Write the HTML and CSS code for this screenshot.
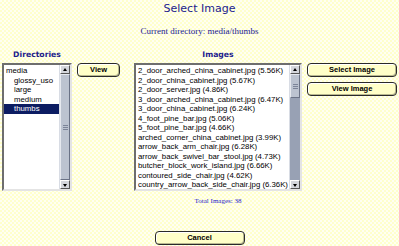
FILE: index.html
```html
<!doctype html>
<html lang="en">
<head>
  <meta charset="utf-8" />
  <title>Select Image</title>
  <link rel="stylesheet" href="styles.css">
</head>
<body>
  <h1 class="title">Select Image</h1>
  <p class="curdir">Current directory: media/thumbs</p>

  <div class="main">
    <div class="heading h-dirs">Directories</div>
    <div class="heading h-images">Images</div>

    <div class="listbox dirs">
      <ul class="items">
        <li>media</li>
        <li class="sub">glossy_uso</li>
        <li class="sub">large</li>
        <li class="sub">medium</li>
        <li class="sub sel">thumbs</li>
      </ul>
      <div class="sbar">
        <div class="arrow up"></div>
        <div class="track"><div class="thumb full"><span class="grip"></span></div></div>
        <div class="arrow down"></div>
      </div>
    </div>

    <div class="col-view"><button class="btn btn-view">View</button></div>

    <div class="listbox images">
      <ul class="items">
        <li>2_door_arched_china_cabinet.jpg (5.56K)</li>
        <li>2_door_china_cabinet.jpg (5.67K)</li>
        <li>2_door_server.jpg (4.86K)</li>
        <li>3_door_arched_china_cabinet.jpg (6.47K)</li>
        <li>3_door_china_cabinet.jpg (6.24K)</li>
        <li>4_foot_pine_bar.jpg (5.06K)</li>
        <li>5_foot_pine_bar.jpg (4.66K)</li>
        <li>arched_corner_china_cabinet.jpg (3.99K)</li>
        <li>arrow_back_arm_chair.jpg (6.28K)</li>
        <li>arrow_back_swivel_bar_stool.jpg (4.73K)</li>
        <li>butcher_block_work_island.jpg (6.66K)</li>
        <li>contoured_side_chair.jpg (4.62K)</li>
        <li>country_arrow_back_side_chair.jpg (6.36K)</li>
      </ul>
      <div class="sbar">
        <div class="arrow up"></div>
        <div class="track"><div class="thumb small"><span class="grip"></span></div></div>
        <div class="arrow down"></div>
      </div>
    </div>

    <div class="col-actions">
      <button class="btn btn-wide">Select Image</button>
      <button class="btn btn-wide">View Image</button>
    </div>

    <div class="total">Total Images: 38</div>
  </div>

  <div class="footer"><button class="btn btn-cancel">Cancel</button></div>
</body>
</html>
```

FILE: styles.css
```css
html, body { margin:0; padding:0; height:100%; overflow:hidden; }
body{
  background-color:#ffffe4;
  background-image: repeating-conic-gradient(#ffffcc 0 25%, #fffff2 0 50%);
  background-size:4px 4px;
  font-family:"Liberation Sans", Arial, sans-serif; color:#000;
}
.title{ margin:0; text-align:center; font:normal 11px/18px "DejaVu Sans", Verdana, sans-serif; color:#1c1c8c; }
.curdir{ margin:7px 0 0; text-align:center; font:9px/12px "Liberation Serif", serif; color:#1a1a90; }

.main{
  display:grid; margin:13px 0 0 2px;
  grid-template-columns:70px 52px 168px 90px; column-gap:5px;
  grid-template-rows:9px 128px auto; row-gap:4px;
}
.heading{ text-align:center; font:bold 7.7px/9px "DejaVu Sans", Verdana, sans-serif; color:#1c1c8c; }
.h-dirs{ grid-column:1; grid-row:1; }
.h-images{ grid-column:3; grid-row:1; }

.listbox{
  grid-row:2; display:flex; background:#fff;
  border:2px solid; border-color:#6e6e6e #e4e4e4 #e4e4e4 #6e6e6e;
}
.dirs{ grid-column:1; }
.images{ grid-column:3; }
.items{ flex:1; margin:0; padding:1px 0 0; list-style:none; overflow:hidden;
  font-size:7.8px; line-height:9.5px; white-space:nowrap; }
.items li{ padding-left:2px; }
.items .sub{ padding-left:10px; }
.items .sel{ background:#0c1c62; color:#fff; }

.sbar{ width:10px; display:flex; flex-direction:column; background:#a4acbe; border-left:1px solid #d8dce4; }
.arrow{ height:9px; background:#d4d6dc; border:1px solid; border-color:#fff #555 #555 #fff; box-sizing:border-box; position:relative; }
.arrow::after{ content:""; position:absolute; left:2px; border-left:2.5px solid transparent; border-right:2.5px solid transparent; }
.up::after{ top:2px; border-bottom:3px solid #000; }
.down::after{ top:3px; border-top:3px solid #000; }
.track{ flex:1; display:flex; flex-direction:column; background:#98a1b4; }
.thumb{ background:#bcc3d0; border:1px solid; border-color:#e6e9ef #6a7286 #6a7286 #e6e9ef; display:flex; align-items:center; justify-content:center; }
.thumb.full{ flex:1; }
.thumb.small{ height:22px; }
.grip{ width:5px; height:5px; background:repeating-linear-gradient(#7c8498 0 1px, transparent 1px 2px); }

.col-view{ grid-column:2; grid-row:2; }
.col-actions{ grid-column:4; grid-row:2; display:flex; flex-direction:column; gap:5px; }
.btn{
  display:block; margin:0; padding:0; height:14px;
  font:bold 7.5px/12px "Liberation Sans", Arial, sans-serif; color:#000;
  background:#ffffc8; border:1px solid #2a2a2a; border-radius:4px;
  box-shadow:inset -1px -1px 0 #b8b890, inset 1px 1px 0 #fff;
}
.btn-view{ width:43px; }
.btn-wide{ width:90px; }
.total{ grid-column:3; grid-row:3; margin-top:1px; text-align:center; font:7px/10px "Liberation Serif", serif; color:#2323c8; }

.footer{ display:flex; justify-content:center; margin-top:25px; }
.btn-cancel{ width:90px; height:14px; }
```
